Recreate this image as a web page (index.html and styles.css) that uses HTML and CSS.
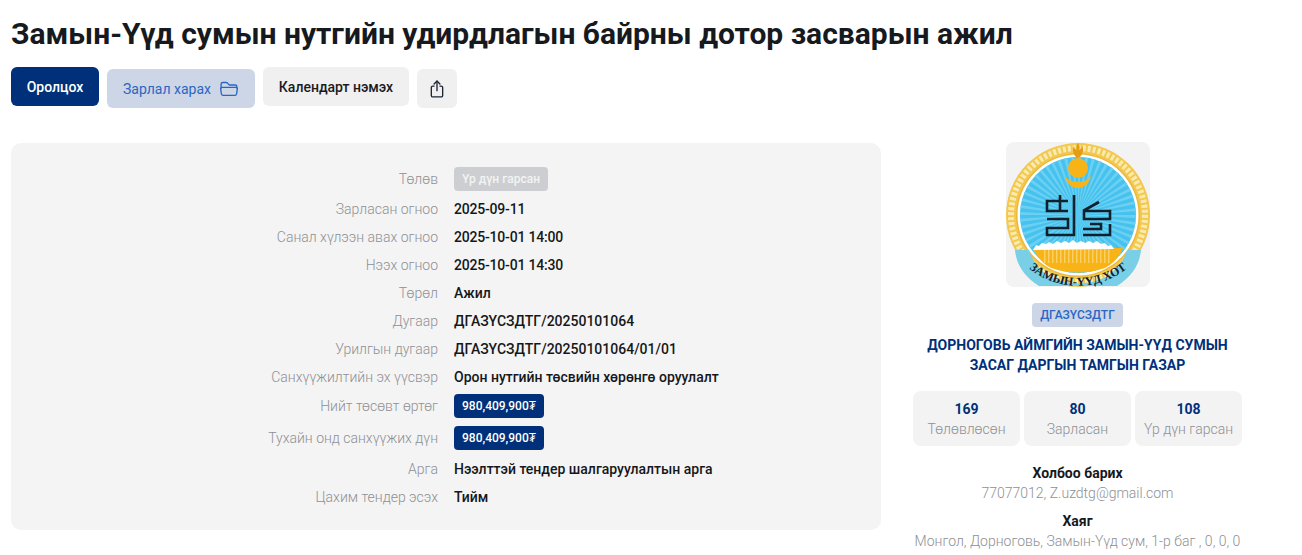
FILE: index.html
```html
<!DOCTYPE html>
<html lang="mn">
<head>
    <meta charset="UTF-8">
    <meta name="viewport" content="width=device-width, initial-scale=1.0">
    <title>Замын-Үүд сумын нутгийн удирдлагын байрны дотор засварын ажил</title>
    <link rel="stylesheet" href="styles.css">
</head>
<body>
    <h1 class="page-title">Замын-Үүд сумын нутгийн удирдлагын байрны дотор засварын ажил</h1>

    <div class="actions">
        <button class="btn btn-primary">Оролцох</button>
        <button class="btn btn-soft btn-low">Зарлал харах
            <svg class="btn-icon" width="20" height="20" viewBox="0 0 24 24" fill="none" stroke="currentColor" stroke-width="1.6" stroke-linejoin="round" stroke-linecap="round">
                <path d="M2.5 11V6.2C2.5 5 3.4 4.2 4.5 4.2h4.2c.6 0 1.1.3 1.5.7l1.6 1.8c.3.3.7.5 1.1.5h6.6c1.1 0 2 .9 2 2V11"/>
                <path d="M3.6 10h16.8c1 0 1.8.9 1.6 1.9l-.9 6c-.2 1-1 1.8-2 1.8H4.9c-1 0-1.8-.8-2-1.8l-.9-6C1.8 10.900 2.600 10 3.600 10z"/>
            </svg>
        </button>
        <button class="btn btn-grey">Календарт нэмэх</button>
        <button class="btn btn-grey btn-low btn-square">
            <svg width="20" height="20" viewBox="0 0 24 24" fill="none" stroke="#1d2433" stroke-width="1.6" stroke-linecap="round" stroke-linejoin="round">
                <path d="M8.500 8.500H7a1.800 1.800 0 0 0-1.800 1.800v9.400A1.800 1.800 0 0 0 7 21.500h10a1.800 1.800 0 0 0 1.800-1.800v-9.400A1.800 1.800 0 0 0 17 8.500h-1.500"/>
                <path d="M12 14V2.500"/>
                <path d="M8.500 6L12 2.500 15.500 6"/>
            </svg>
        </button>
    </div>

    <div class="content">
        <div class="details">
            <div class="row row-tag row-first"><div class="label">Төлөв</div><div class="value"><span class="tag tag-muted">Үр дүн гарсан</span></div></div>
            <div class="row"><div class="label">Зарласан огноо</div><div class="value value-date">2025-09-11</div></div>
            <div class="row"><div class="label">Санал хүлээн авах огноо</div><div class="value value-date">2025-10-01 14:00</div></div>
            <div class="row"><div class="label">Нээх огноо</div><div class="value value-date">2025-10-01 14:30</div></div>
            <div class="row"><div class="label">Төрөл</div><div class="value">Ажил</div></div>
            <div class="row"><div class="label">Дугаар</div><div class="value">ДГАЗҮСЗДТГ/20250101064</div></div>
            <div class="row"><div class="label">Урилгын дугаар</div><div class="value">ДГАЗҮСЗДТГ/20250101064/01/01</div></div>
            <div class="row"><div class="label">Санхүүжилтийн эх үүсвэр</div><div class="value">Орон нутгийн төсвийн хөрөнгө оруулалт</div></div>
            <div class="row row-tag"><div class="label">Нийт төсөвт өртөг</div><div class="value"><span class="tag tag-navy">980,409,900₮</span></div></div>
            <div class="row row-tag"><div class="label">Тухайн онд санхүүжих дүн</div><div class="value"><span class="tag tag-navy">980,409,900₮</span></div></div>
            <div class="row"><div class="label">Арга</div><div class="value">Нээлттэй тендер шалгаруулалтын арга</div></div>
            <div class="row"><div class="label">Цахим тендер эсэх</div><div class="value">Тийм</div></div>
        </div>

        <aside class="org">
            <div class="org-logo">
                <svg width="144" height="145" viewBox="0 0 144 145">
                    <defs>
                        <path id="logoArc" d="M18 122 A 78 78 0 0 0 126 122"/>
                    </defs>
                    <circle cx="72" cy="73" r="72" fill="#f2c84f"/>
                    <circle cx="72" cy="73" r="67" fill="none" stroke="#fbeab0" stroke-width="6" stroke-dasharray="3 2"/>
                    <circle cx="72" cy="73" r="62" fill="#eeb93a"/>
                    <circle cx="72" cy="73" r="60.500" fill="#fff"/>
                    <circle cx="72" cy="73" r="58" fill="#45c2ee"/>
                    <circle cx="72" cy="73" r="29" fill="none" stroke="#6dd0f2" stroke-width="58" stroke-dasharray="1.500 2"/>
                    <path d="M27 106h90q-6 14-18 20q-27 9-54 0q-12-6-18-20z" fill="#f8b417"/>
                    <path d="M38 114H106" stroke="#fcd063" stroke-width="14" stroke-dasharray="1.500 2.500"/>
                    <path d="M27 108l3-5 3 1 3-3 4 1 3-2 4 2 4-3 4 2 4-2 4 2 4-3 4 3 4-2 4 2 4-2 4 2 4-2 4 3 4-1 3 3 3-1 3 4z" fill="#fff"/>
                    <path d="M9 108h14q5 17 21 27q28 13 56 0q16-10 21-27h14q-2 22-24 36h-78q-22-14-24-36z" fill="#78cfe6"/>
                    <text class="logo-text"><textPath href="#logoArc" startOffset="50%" text-anchor="middle">ЗАМЫН-ҮҮД ХОТ</textPath></text>
                    <path d="M72 1c2 3 2 5 1 7 2-1 3-2 3-4 2 3 1 8-2 11h-4c-3-3-4-8-2-11 0 2 1 3 3 4-1-2-1-4 1-7z" fill="#e59c12"/>
                    <circle cx="72" cy="26" r="10" fill="#f8b417"/>
                    <path d="M59 32a13 14 0 0 0 26 0a13 8 0 0 1-26 0z" fill="#f8b417"/>
                    <g fill="none" stroke="#10202c" stroke-width="2.600">
                        <path d="M68 53v40H41v-7h21v-9H41M62 59H41v10h21M54 53v16"/>
                        <path d="M77 69l16-9M77 69h27v8H78v-8M104 82v11H77M84 82h11v5H77"/>
                    </g>
                </svg>
            </div>
            <span class="org-code">ДГАЗҮСЗДТГ</span>
            <div class="org-name">ДОРНОГОВЬ АЙМГИЙН ЗАМЫН-ҮҮД СУМЫН<br>ЗАСАГ ДАРГЫН ТАМГЫН ГАЗАР</div>
            <div class="stats">
                <div class="stat"><b>169</b><span>Төлөвлөсөн</span></div>
                <div class="stat"><b>80</b><span>Зарласан</span></div>
                <div class="stat"><b>108</b><span>Үр дүн гарсан</span></div>
            </div>
            <div class="contact">
                <h4>Холбоо барих</h4>
                <p>77077012, Z.uzdtg@gmail.com</p>
            </div>
            <div class="contact">
                <h4>Хаяг</h4>
                <p>Монгол, Дорноговь, Замын-Үүд сум, 1-р баг , 0, 0, 0</p>
            </div>
        </aside>
    </div>
</body>
</html>
```

FILE: styles.css
```css
body {
    margin: 0;
    padding: 0 11px;
    height: 555px;
    overflow: hidden;
    background: #fff;
    color: #111;
    font-family: Roboto, sans-serif;
    font-size: 14px;
}
.page-title {
    margin: 0;
    padding-top: 17px;
    font-size: 30px;
    line-height: 33px;
    font-weight: 700;
    color: #16191d;
}
.actions {
    display: flex;
    align-items: flex-start;
    gap: 8px;
    margin-top: 17px;
}
.btn {
    display: flex;
    align-items: center;
    justify-content: center;
    gap: 8px;
    height: 39px;
    padding: 0 16px;
    border: none;
    border-radius: 6px;
    font-family: inherit;
    font-size: 14px;
}
.btn-low {
    margin-top: 2px;
}
.btn-primary {
    width: 88px;
    padding: 0;
    background: #00307a;
    color: #fff;
    font-weight: 500;
}
.btn-soft {
    width: 148px;
    padding: 0;
    background: #cdd6e6;
    color: #2a66c4;
}
.btn-grey {
    width: 146px;
    padding: 0;
    background: #f0f0f0;
    color: #1b1b1f;
    font-weight: 500;
}
.btn-square {
    width: 40px;
}
.content {
    display: flex;
    align-items: flex-start;
    margin-top: 35px;
}
.details {
    width: 870px;
    height: 387px;
    box-sizing: border-box;
    padding-top: 22px;
    background: #f4f4f4;
    border-radius: 10px;
}
.row {
    display: flex;
    align-items: center;
    gap: 16px;
    height: 28px;
}
.row-tag {
    height: 30px;
    padding-bottom: 2px;
}
.row-first {
    height: 28px;
}
.label {
    width: 427px;
    text-align: right;
    color: #8f9094;
    font-weight: 300;
}
.value {
    color: #15171a;
    font-weight: 500;
}
.value-date {
    letter-spacing: -0.2px;
}
.tag {
    display: inline-block;
    height: 24px;
    line-height: 24px;
    padding: 0 8px;
    border-radius: 4px;
    font-size: 12px;
    font-weight: 500;
}
.tag-muted {
    background: #cdced2;
    color: #f3f3f3;
}
.tag-navy {
    background: #00307a;
    color: #fff;
}
.org {
    display: flex;
    flex-direction: column;
    align-items: center;
    width: 345px;
    margin-left: 24px;
    margin-top: -1px;
    text-align: center;
}
.org-logo {
    width: 144px;
    height: 145px;
    background: #f3f3f3;
    border-radius: 8px;
    overflow: hidden;
}
.org-code {
    margin-top: 16px;
    height: 24px;
    line-height: 24px;
    padding: 0 8px;
    border-radius: 4px;
    background: #cdd6e6;
    color: #2a66c4;
    font-size: 12px;
    font-weight: 500;
}
.org-name {
    margin-top: 8px;
    color: #00307a;
    font-size: 14px;
    line-height: 20px;
    font-weight: 700;
}
.stats {
    display: flex;
    justify-content: center;
    gap: 4px;
    margin-top: 16px;
}
.stat {
    display: flex;
    flex-direction: column;
    align-items: center;
    justify-content: center;
    width: 107px;
    height: 55px;
    background: #f3f3f3;
    border-radius: 8px;
    line-height: 20px;
}
.stat b {
    color: #00307a;
    font-weight: 700;
}
.stat span {
    color: #8f9094;
    font-weight: 300;
}
.contact {
    margin-top: 17px;
    line-height: 20px;
}
.contact + .contact {
    margin-top: 8px;
}
.contact h4 {
    margin: 0;
    font-size: 14px;
    font-weight: 700;
    color: #16191d;
}
.contact p {
    margin: 0;
    color: #8f9094;
    font-weight: 300;
}
.logo-text {
    font-family: "Liberation Serif", serif;
    font-size: 12px;
    font-weight: 700;
    fill: #10202c;
}
```
